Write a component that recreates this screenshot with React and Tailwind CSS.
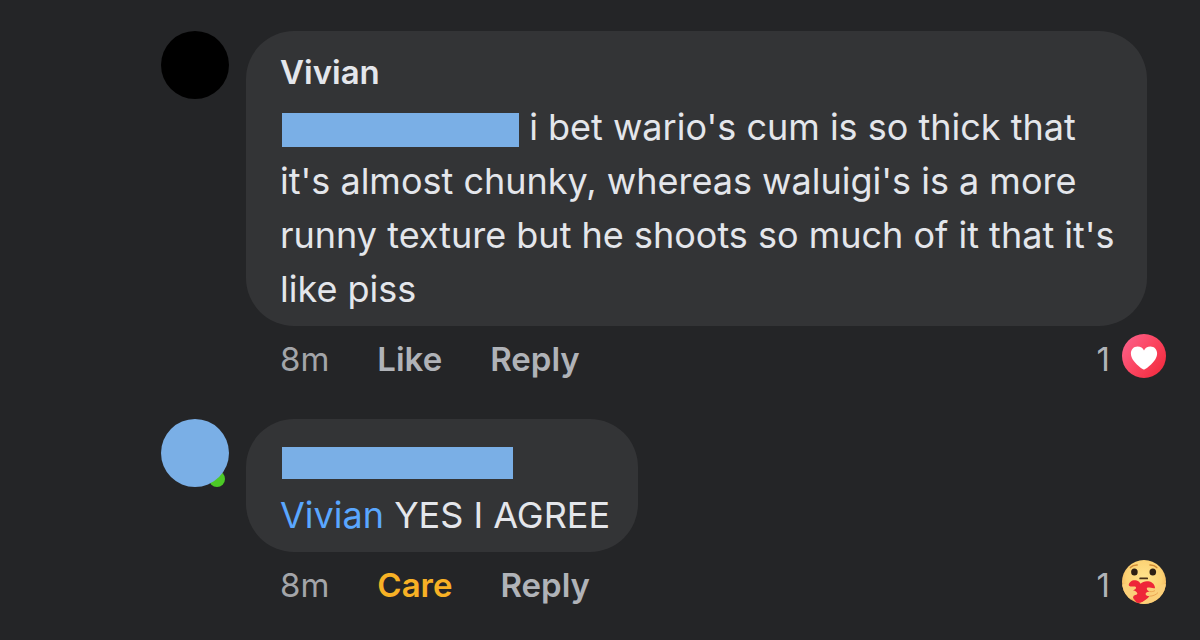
function Redacted({ className }) {
  return <span className={`inline-block bg-[#7aafe6] ${className}`} />;
}

function LoveIcon() {
  return (
    <svg className="w-11 h-11" viewBox="0 0 44 44" role="img" aria-label="Love">
      <defs>
        <linearGradient id="love" x1="0" y1="0.2" x2="0.9" y2="0.9">
          <stop offset="0" stopColor="#fb5f88" />
          <stop offset="0.5" stopColor="#fb4560" />
          <stop offset="1" stopColor="#f22c40" />
        </linearGradient>
      </defs>
      <circle cx="22" cy="22" r="22" fill="url(#love)" />
      <path
        fill="#fff"
        d="M22 35.4C20.6 35.4 8.9 27.4 8.9 19.4C8.9 15.2 11.8 12.4 15.5 12.4C18.6 12.4 20.9 14 22 16.4C23.1 14 25.4 12.4 28.5 12.4C32.2 12.4 35.1 15.2 35.1 19.4C35.1 27.4 23.4 35.4 22 35.4Z"
      />
    </svg>
  );
}

function CareIcon() {
  return (
    <svg className="w-11 h-11" viewBox="0 0 44 44" role="img" aria-label="Care">
      <defs>
        <radialGradient id="face" cx="0.5" cy="0.4" r="0.62">
          <stop offset="0" stopColor="#ffe38c" />
          <stop offset="0.65" stopColor="#fcd274" />
          <stop offset="1" stopColor="#f0ab55" />
        </radialGradient>
        <clipPath id="faceClip">
          <circle cx="22" cy="22" r="22" />
        </clipPath>
      </defs>
      <circle cx="22" cy="22" r="22" fill="url(#face)" />
      <g clipPath="url(#faceClip)">
        {/* brows, eyes, mouth */}
        <path d="M8.4 7.6C10 5.9 12.4 4.9 15.2 5" fill="none" stroke="#cf8a35" strokeWidth="1.5" strokeLinecap="round" />
        <path d="M28 5C30.8 4.9 33.2 5.9 34.8 7.6" fill="none" stroke="#cf8a35" strokeWidth="1.5" strokeLinecap="round" />
        <ellipse cx="12.4" cy="12" rx="3.3" ry="3.6" fill="#2e2014" />
        <ellipse cx="30.8" cy="12" rx="3.3" ry="3.6" fill="#2e2014" />
        <path d="M18.2 18.4H25.2" fill="none" stroke="#4a3018" strokeWidth="1.8" strokeLinecap="round" />
        {/* hugged heart */}
        <path
          fill="#ee2638"
          d="M15 43C10.5 38.5 7 31 6.6 25.6C7 21.6 11 19.4 14.6 20.6C16.6 21.2 17.8 22.4 18.6 23.8C20.4 21.6 24.2 20.4 27.6 21.6C31.8 23 33.8 26.4 32.8 30.4C31 37 23 42.6 15 43Z"
        />
        {/* hands */}
        <path
          fill="#fbd079"
          d="M-1 25C3 23.2 5.6 24.2 7.4 26C9 27.4 12.4 25.8 13.8 27C14.8 28.4 13 29.8 11 30.2C13.4 30.8 15 32 15.4 33.4C15.6 34.8 13.4 35 12.2 35.4C10.6 36 12 39 9 39.6C5 40 1 38 -1 34Z"
        />
        <path
          fill="#fbd079"
          d="M45 24C39 23.6 36 27.4 33 28.2C30 28.8 26.4 26.8 25 28C24.2 29.4 25.8 31 28 31.6C25.4 31.8 23.4 32.6 23.6 34.2C23.8 35.6 25.6 36 27.4 36.2C26 38.4 22 41 17.6 43.6L20 46H45Z"
        />
        <path d="M3.2 35.8C5.2 38.8 8 39.8 10 39.2" fill="none" stroke="#e9a04e" strokeWidth="1" />
        <path d="M28 31.6C30 31.8 31.6 31.4 33 30.6M27.4 36.2C30.8 36.2 34 34.8 36 32.6" fill="none" stroke="#e9a04e" strokeWidth="0.9" />
      </g>
    </svg>
  );
}

function Avatar({ className, online }) {
  return (
    <div className="relative shrink-0 w-[68px] h-[68px]">
      {online && <span className="absolute right-1 bottom-0 w-4 h-4 rounded-full bg-[#4cc926]" />}
      <div className={`relative w-full h-full rounded-full ${className}`} />
    </div>
  );
}

function Comment({ avatar, name, children, reaction, reactionColor, icon }) {
  return (
    <article className="flex gap-[17px]">
      {avatar}
      <div className="flex-1 min-w-0">
        <div className="w-fit mr-[19px] pt-[15px] pb-[10px] pl-[34px] pr-7 rounded-[48px] bg-[#333436]">
          <div className="h-[54px] flex items-center text-[33px] font-semibold">{name}</div>
          <p className="text-[36px] leading-[54px]">{children}</p>
        </div>
        <footer className="h-[68px] pl-[34px] flex items-center text-[33px] text-[#b0b3b8]">
          <span className="mr-12 text-[#a3a5a9]">8m</span>
          <button className={`mr-12 font-semibold ${reactionColor}`}>{reaction}</button>
          <button className="font-semibold">Reply</button>
          <div className="ml-auto flex items-center gap-3">
            <span>1</span>
            <span className="pb-2">{icon}</span>
          </div>
        </footer>
      </div>
    </article>
  );
}

export default function App() {
  return (
    <main className="min-h-screen pt-[31px] pl-[161px] pr-[34px] flex flex-col gap-[25px] bg-[#242527] text-[#e4e6eb] font-['Inter',sans-serif]">
      <Comment
        avatar={<Avatar className="bg-black" />}
        name="Vivian"
        reaction="Like"
        reactionColor="text-[#b0b3b8]"
        icon={<LoveIcon />}
      >
        <Redacted className="w-[237px] h-[34px] ml-[2px] align-middle" /> i bet wario's cum is so thick that
        it's almost chunky, whereas waluigi's is a more runny texture but he shoots so much of it that
        it's like piss
      </Comment>
      <Comment
        avatar={<Avatar className="bg-[#7aafe6]" online />}
        name={<Redacted className="w-[231px] h-8 mt-1 ml-[2px]" />}
        reaction="Care"
        reactionColor="text-[#f7b125]"
        icon={<CareIcon />}
      >
        <a href="#vivian" className="text-[#5aa7ff]">Vivian</a> YES I AGREE
      </Comment>
    </main>
  );
}
